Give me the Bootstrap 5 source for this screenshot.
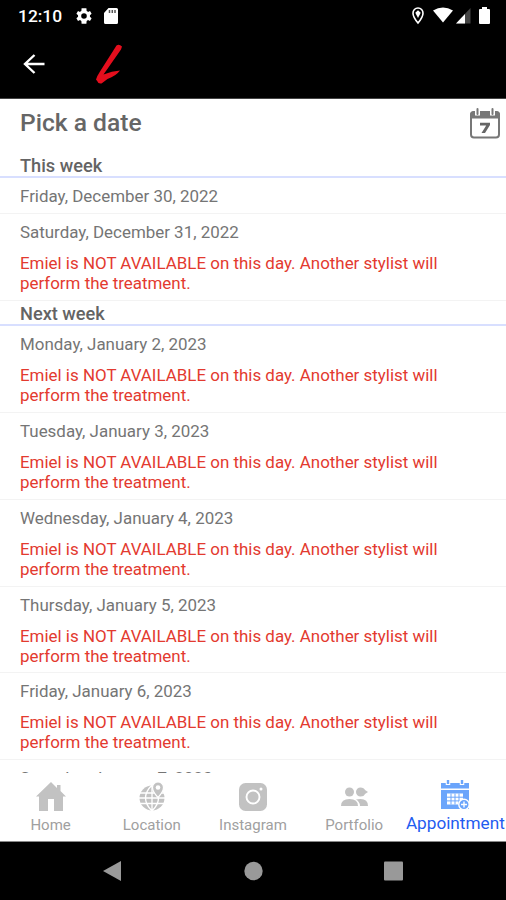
<!DOCTYPE html>
<html lang="en">
<head>
<meta charset="utf-8">
<meta name="viewport" content="width=device-width, initial-scale=1">
<title>Pick a date</title>
<link href="https://cdn.jsdelivr.net/npm/bootstrap@5.3.0/dist/css/bootstrap.min.css" rel="stylesheet">
<style>
body{font-family:Roboto,"Liberation Sans",sans-serif;background:#fff;color:#757575}
.phone{height:900px;width:506px}
svg{display:block;flex:none}
.topbar{height:99px;background:#000;border-bottom:1px solid #444}
.status{height:32px;padding:0 16px 0 18px}
.clock{font-size:17.4px;font-weight:500;width:44px;margin-right:14px;white-space:nowrap}
.sd-card{margin-left:12px}
.appbar{height:64px;padding-left:23px}
.brand{margin-left:49px}
.title-row{height:54px;padding:4px 5px 0 20px}
.title-row h1{font-size:24.6px;font-weight:500;color:#666;padding-top:5px}
.title-row svg{margin-top:4px}
.week{height:25.2px;padding-left:20px;font-size:18.2px;line-height:26px;font-weight:500;color:#646464;border-bottom:2px solid #d8dfff}
.day{height:36px;padding:8px 20px 0;border-bottom:1px solid #f3f3f3;font-size:16.93px;line-height:20px;white-space:nowrap}
.day.busy{height:86.8px}
.warn{color:#e33a2f;margin-top:11px}
.tabs{height:69px;border-bottom:1px solid #888}
.tab-item{width:101.2px;font-size:15px;line-height:20px;color:#a0a0a0;white-space:nowrap;padding-top:8px}
.tab-item svg{margin-bottom:4px;color:#c2c2c2}
.tab-item.on{font-size:17.2px;color:#1f5cf0;padding-top:7px}
.tab-item.on svg{color:#6ba5fb;margin-bottom:2px}
.sysnav{height:58px;padding:0 102px}
</style>
<script src="https://cdn.jsdelivr.net/npm/bootstrap@5.3.0/dist/js/bootstrap.bundle.min.js"></script>
</head>
<body>
<div class="phone d-flex flex-column overflow-hidden">
  <header class="topbar text-white flex-shrink-0">
    <div class="status d-flex align-items-center">
      <span class="clock">12:10</span>
      <svg width="16" height="16" viewBox="2 2 20 20" fill="#fff"><path d="M19.4 13a7 7 0 0 0 0-2l2.1-1.7-2-3.4-2.5 1a7 7 0 0 0-1.7-1L15 2.3H9L8.7 5.900a7 7 0 0 0-1.700 1l-2.500-1-2 3.400L4.600 11a7 7 0 0 0 0 2l-2.100 1.700 2 3.400 2.500-1a7 7 0 0 0 1.700 1l.3 3.600h6l.3-3.600a7 7 0 0 0 1.700-1l2.500 1 2-3.400zM12 15.500a3.500 3.500 0 1 1 0-7 3.500 3.500 0 0 1 0 7z" fill-rule="evenodd"/></svg>
      <svg class="sd-card me-auto" width="14" height="16" viewBox="0 0 14 16"><path d="M4.500 0H12.500A1.500 1.500 0 0 1 14 1.500V14.500A1.500 1.500 0 0 1 12.500 16H1.500A1.500 1.500 0 0 1 0 14.500V5z" fill="#fff"/><path d="M5.500 2v3M8.300 2v3M11 2v3" stroke="#555" stroke-width="1.500"/></svg>
      <svg width="67" height="18" viewBox="412 7 67 18"><path d="M418 8a5 5 0 0 0-5 5.200c0 3.800 5 9.800 5 9.800s5-6 5-9.800A5 5 0 0 0 418 8z" fill="none" stroke="#fff" stroke-width="1.600"/><path d="M418 10.200l2.700 2.600L418 18l-2.700-5.200z" fill="#fff"/><path d="M433 10.500q10-6 20 0L443 22.500z" fill="#fff"/><path d="M456 23.500L470.500 8v15.500z" fill="#444"/><path d="M456 23.500l9-9.600v9.600z" fill="#fff"/></svg>
      <svg width="11" height="18" viewBox="0 0 11 18" fill="#fff"><path d="M3 0h5v2h2q1 0 1 1V16q0 1-1 1H1q-1 0-1-1V3q0-1 1-1h2z"/></svg>
    </div>
    <div class="appbar d-flex align-items-center">
      <svg width="22" height="20" viewBox="0 0 22 20" fill="none" stroke="#fff" stroke-width="2.400"><path d="M11.500 1L2 10l9.500 9M2 10h19.500"/></svg>
      <svg class="brand" width="32" height="42" viewBox="0 0 32 42" fill="#e50e1d"><path d="M22.500 2.500Q25 .5 28 3.500L27 6.500 9.500 31.500Q18 28 26 27.500 22 33 13.500 36L7.500 40.500Q4 41 3.500 38.500L2 36.500Q3 33 6 28.500z"/></svg>
    </div>
  </header>
  <main class="flex-grow-1 overflow-hidden">
    <div class="title-row d-flex justify-content-between align-items-start">
      <h1 class="mb-0">Pick a date</h1>
      <svg width="32" height="32" viewBox="0 0 32 32"><rect x="2" y="5.500" width="28" height="25" rx="3" fill="#fff" stroke="#777" stroke-width="2"/><path d="M1 11.500V7.500Q1 4 4.500 4h23Q31 4 31 7.500v4z" fill="#777"/><path d="M8.500 1v7.500M23.500 1v7.500" stroke="#fff" stroke-width="5"/><path d="M8.500 2v5M23.500 2v5" stroke="#777" stroke-width="2" stroke-linecap="round"/><path d="M11 15.700h10v2.300L16 26h-3.500l4.700-7.600H11z" fill="#666"/></svg>
    </div>
    <div class="week">This week</div>
    <div class="day">Friday, December 30, 2022</div>
    <div class="day busy">Saturday, December 31, 2022<div class="warn">Emiel is NOT AVAILABLE on this day. Another stylist will<br>perform the treatment.</div></div>
    <div class="week">Next week</div>
    <div class="day busy">Monday, January 2, 2023<div class="warn">Emiel is NOT AVAILABLE on this day. Another stylist will<br>perform the treatment.</div></div>
    <div class="day busy">Tuesday, January 3, 2023<div class="warn">Emiel is NOT AVAILABLE on this day. Another stylist will<br>perform the treatment.</div></div>
    <div class="day busy">Wednesday, January 4, 2023<div class="warn">Emiel is NOT AVAILABLE on this day. Another stylist will<br>perform the treatment.</div></div>
    <div class="day busy">Thursday, January 5, 2023<div class="warn">Emiel is NOT AVAILABLE on this day. Another stylist will<br>perform the treatment.</div></div>
    <div class="day busy">Friday, January 6, 2023<div class="warn">Emiel is NOT AVAILABLE on this day. Another stylist will<br>perform the treatment.</div></div>
    <div class="day busy">Saturday, January 7, 2023</div>
  </main>
  <nav class="tabs bg-white d-flex flex-shrink-0">
    <div class="tab-item d-flex flex-column align-items-center">
      <svg width="30" height="30" viewBox="0 0 30 30" fill="currentColor"><path d="M15 1L0 15.500h3V30h9V18h6v12h9V15.500h3L24.500 10V4h-3.500v3z"/></svg>
      <span>Home</span>
    </div>
    <div class="tab-item d-flex flex-column align-items-center">
      <svg width="30" height="30" viewBox="0 0 30 30" fill="none"><circle cx="15" cy="17" r="12.500" fill="currentColor"/><path d="M2 12h26M2 17h26M2 22.500h26M15 4v26M15 4q-13 13 0 26M15 4q13 13 0 26" stroke="#fff" stroke-width="1.300"/><path d="M21 1a5.500 5.500 0 0 0-5.500 5.500q0 4 5.500 10 5.500-6 5.500-10A5.500 5.500 0 0 0 21 1z" fill="currentColor" stroke="#fff" stroke-width="1.200"/><circle cx="21" cy="6.500" r="2.300" fill="#fff"/></svg>
      <span>Location</span>
    </div>
    <div class="tab-item d-flex flex-column align-items-center">
      <svg width="30" height="30" viewBox="0 0 30 30" fill="none"><rect x="1" y="2" width="28" height="28" rx="6.500" fill="currentColor"/><circle cx="15" cy="16" r="6.500" stroke="#fff" stroke-width="1.900"/><circle cx="23" cy="8" r="1.500" fill="#fff"/></svg>
      <span>Instagram</span>
    </div>
    <div class="tab-item d-flex flex-column align-items-center">
      <svg width="30" height="30" viewBox="0 0 30 30" fill="currentColor"><circle cx="10.500" cy="11" r="4.500"/><path d="M21.500 6.500q3.500 0 4.500 2.500l3 2-3 2q-1 2.500-4.500 2.500a4.500 4.500 0 0 1 0-9zM2 25q0-7 8.500-7t8.500 7zM17 18.500q1.500-.5 4.500-.5 7.500 0 7.500 7h-8q0-4-4-6.500z"/></svg>
      <span>Portfolio</span>
    </div>
    <div class="tab-item on d-flex flex-column align-items-center">
      <svg width="30" height="31" viewBox="0 0 30 31" fill="currentColor"><path d="M1 3h28v5.500H1zM1 10h28v19H1z"/><path d="M8 0v5M22 0v5" stroke="#fff" stroke-width="4.500"/><path d="M8 0v4M22 0v4" stroke="currentColor" stroke-width="2.400"/><path d="M7 13.500h16v11H7z" fill="#fff"/><path d="M7 17.200h16M7 20.900h16M11 13.500v11M15 13.500v11M19 13.500v11" stroke="currentColor" stroke-width="1"/><circle cx="24" cy="24.500" r="5.200" stroke="#fff" stroke-width="1.400"/><path d="M24 21.500v6M21 24.500h6" stroke="#fff" stroke-width="1.400"/></svg>
      <span>Appointment</span>
    </div>
  </nav>
  <footer class="sysnav bg-black d-flex justify-content-between align-items-center flex-shrink-0">
    <svg width="20" height="22" viewBox="0 0 20 22" fill="#999"><path d="M1 11L19 1v20z"/></svg>
    <svg width="20" height="20" viewBox="0 0 20 20" fill="#999"><circle cx="10.500" cy="10" r="9.200"/></svg>
    <svg width="20" height="20" viewBox="0 0 20 20" fill="#999"><rect x="0" y=".5" width="19" height="19" rx="1"/></svg>
  </footer>
</div>
</body>
</html>
